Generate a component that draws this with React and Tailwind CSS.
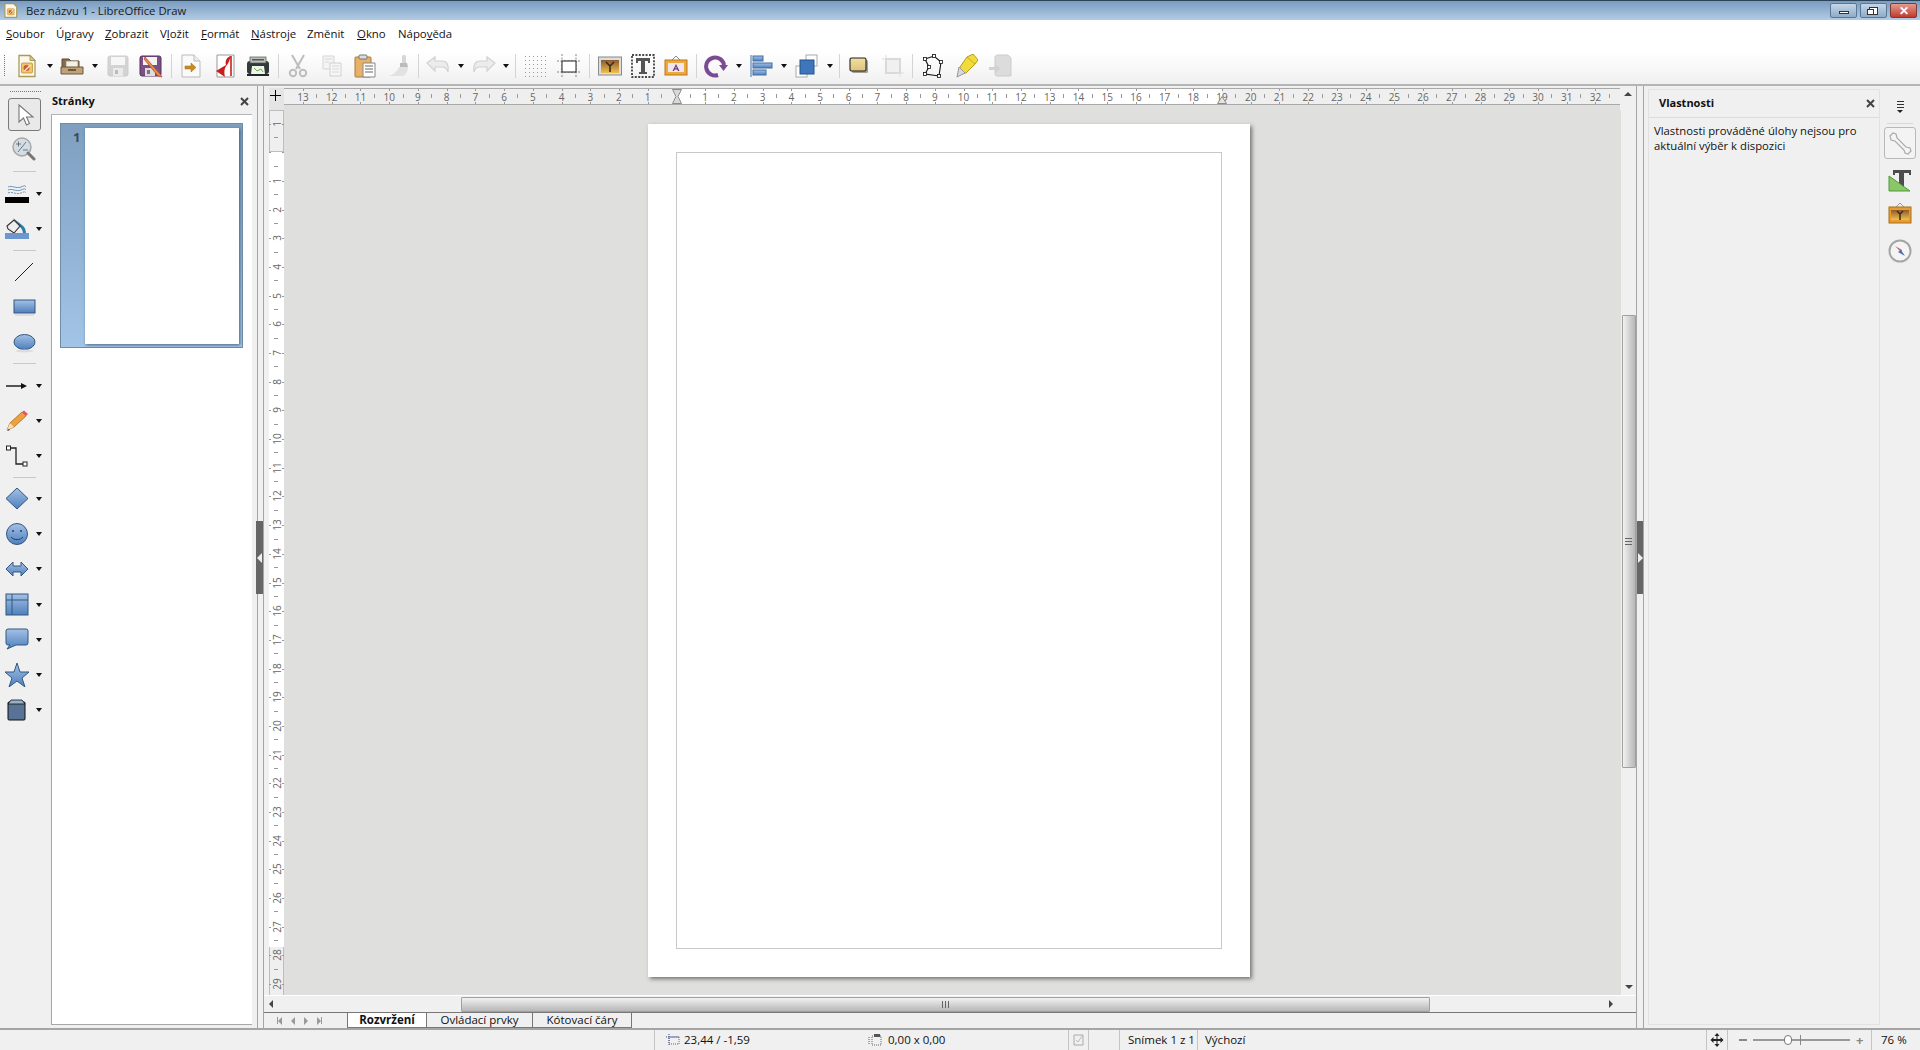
const font = { fontFamily: '"Open Sans", "Noto Sans", sans-serif' };
const MENU = [
  ["", "S", "oubor", "w-[50px]"],
  ["Ú", "p", "ravy", "w-[49px]"],
  ["", "Z", "obrazit", "w-[55px]"],
  ["V", "l", "ožit", "w-[41px]"],
  ["", "F", "ormát", "w-[50px]"],
  ["", "N", "ástroje", "w-[56px]"],
  ["Změnit", "", "", "w-[50px]"],
  ["", "O", "kno", "w-[41px]"],
  ["Nápo", "v", "ěda", "w-[60px]"],
];

/* ============ SMALL PARTS ============ */
function Arrow() {
  return (
    <div className="flex w-[12px] justify-center">
      <div className="h-0 w-0 border-x-[3.5px] border-t-[4px] border-x-transparent border-t-[#111]" />
    </div>
  );
}

function Sep() {
  return (
    <div className="flex h-[24px] w-[7px] justify-center">
      <div className="h-full w-px bg-[#d4d4d4]" />
    </div>
  );
}

function Slot({ children }) {
  return <div className="flex h-[28px] w-[33.3px] items-center justify-center">{children}</div>;
}

function Ico({ s = 24, children }) {
  return (
    <svg width={s} height={s} viewBox="0 0 24 24" fill="none">
      {children}
    </svg>
  );
}

/* ============ ICONS ============ */
const grad = (
  <defs>
    <linearGradient id="blue" x1="0" y1="0" x2="0" y2="1">
      <stop offset="0" stopColor="#a3c1e6" />
      <stop offset="1" stopColor="#4f7fbd" />
    </linearGradient>
    <linearGradient id="sand" x1="0" y1="0" x2="0" y2="1">
      <stop offset="0" stopColor="#f2dfa0" />
      <stop offset="1" stopColor="#dfc27c" />
    </linearGradient>
    <linearGradient id="sunset" x1="0" y1="0" x2="0" y2="1">
      <stop offset="0" stopColor="#8a5a30" />
      <stop offset="1" stopColor="#f2c04a" />
    </linearGradient>
  </defs>
);

const DrawBadge = ({ x = 6, y = 8 }) => (
  <g transform={`translate(${x} ${y})`}>
    <rect width="11" height="10" rx="1" fill="#f1c565" stroke="#b8862e" strokeWidth=".7" />
    <circle cx="5" cy="5" r="3" fill="#c65a3a" />
    <path d="M3 8 9 2" stroke="#f7efe0" strokeWidth="1.2" />
  </g>
);

const Icons = {
  New: () => (
    <Ico>
      <path d="M4 1.500h11l5 5v16H4z" fill="#fdf8ec" stroke="#a99a5a" strokeWidth="1.3" />
      <path d="M15 1.500v5h5z" fill="#f1c565" stroke="#a99a5a" />
      <DrawBadge x="6.5" y="9" />
    </Ico>
  ),
  Open: () => (
    <Ico>
      <path d="M2 5h7l2 2h8v11H2z" fill="#8a6c46" stroke="#5f4a2e" />
      <rect x="6" y="7" width="12" height="7" fill="#f3f0e6" stroke="#888" strokeWidth=".7" />
      <path d="M1 13h22v7H1z" fill="#bda27c" stroke="#6e5636" />
      <path d="M8 15h8v2H8z" fill="#6e5636" />
    </Ico>
  ),
  Save: () => (
    <Ico>
      <g opacity=".45">
        <rect x="2" y="2" width="20" height="20" rx="2" fill="#a8a8a8" stroke="#999" />
        <rect x="5" y="3" width="14" height="8" fill="#f3f3f3" />
        <rect x="7" y="14" width="10" height="8" fill="#ddd" />
        <rect x="9" y="16" width="3" height="4" fill="#777" />
      </g>
    </Ico>
  ),
  SaveAs: () => (
    <Ico>
      <rect x="1" y="2" width="21" height="20" rx="2" fill="#7c4f86" stroke="#55305e" />
      <rect x="4" y="3" width="14" height="8" fill="#f3f3f3" />
      <rect x="6" y="14" width="10" height="8" fill="#ddd" />
      <rect x="8" y="16" width="3" height="4" fill="#777" />
      <path d="M6 3 21 20l2 3-4-1L5 5z" fill="#e8913a" stroke="#b0483a" strokeWidth=".8" />
    </Ico>
  ),
  Export: () => (
    <Ico>
      <path d="M3 1h12l6 6v16H3z" fill="#fafafa" stroke="#bbb" />
      <path d="M15 1v6h6" stroke="#bbb" fill="#eee" />
      <path d="M6 12h6V9l5 4.500-5 4.500v-3H6z" fill="#c98a1e" stroke="#a36c10" strokeWidth=".5" />
    </Ico>
  ),
  Pdf: () => (
    <Ico>
      <path d="M4 1h17v22H4z" fill="#fff" stroke="#999" />
      <path d="M18 2C13 3 12 8 13 11L3 17l9 6c-1-4-1-9 2-12 2-2 3-7 4-9z" fill="#c81e1e" />
      <path d="M18 2v20" stroke="#c81e1e" strokeWidth="1.6" />
    </Ico>
  ),
  Print: () => (
    <Ico>
      <rect x="1" y="7" width="22" height="13" rx="3" fill="#33383a" />
      <rect x="4" y="3" width="16" height="6" fill="#b9c1b9" stroke="#555" strokeWidth=".7" />
      <rect x="6" y="5" width="12" height="1.5" fill="#555" />
      <path d="M6 12h12l1 8H5z" fill="#eef5ea" />
      <path d="M8 14l3 3 4-2 2 3" stroke="#6aa84f" />
      <path d="M1 20h22v2H1z" fill="#22262a" />
    </Ico>
  ),
  Cut: () => (
    <Ico>
      <g stroke="#b8b8b8" strokeWidth="2" opacity=".9">
        <path d="M6 1 14 15M18 1 10 15" />
        <circle cx="7" cy="19" r="3.2" />
        <circle cx="17" cy="19" r="3.2" />
      </g>
    </Ico>
  ),
  Copy: () => (
    <Ico>
      <path d="M3 2h11v13H3z" fill="#f4f4f4" stroke="#d5d5d5" />
      <path d="M10 9h11v13H10z" fill="#f6f6f6" stroke="#d0d0d0" />
      <path d="M5 5h7M5 8h4M12 12h7M12 15h7M12 18h7" stroke="#d8d8d8" />
    </Ico>
  ),
  Paste: () => (
    <Ico>
      <rect x="2" y="3" width="16" height="20" rx="1" fill="#e7b168" stroke="#a67a3a" />
      <rect x="6" y="1" width="8" height="4" rx="1" fill="#ddd" stroke="#777" />
      <path d="M10 9h12v14H10z" fill="#fff" stroke="#888" />
      <path d="M12 12h8M12 15h8M12 18h8" stroke="#666" />
    </Ico>
  ),
  Brush: () => (
    <Ico>
      <rect x="16" y="1" width="4" height="9" rx="1.5" fill="#d6d6d6" />
      <path d="M14 9h7l1 4h-8z" fill="#bbb" />
      <path d="M13 13h9c0 5-3 9-6 9H2c5-1 9-4 11-9z" fill="#e2e2e2" />
    </Ico>
  ),
  Undo: () => (
    <Ico>
      <path d="M1 9 9 3v4h7c5 0 7 4 6 11-1-4-3-5-6-5H9v4z" fill="#ececec" stroke="#d2d2d2" strokeWidth="1.2" />
    </Ico>
  ),
  Redo: () => (
    <Ico>
      <path d="M23 9 15 3v4H8c-5 0-7 4-6 11 1-4 3-5 6-5h7v4z" fill="#ececec" stroke="#d2d2d2" strokeWidth="1.2" />
    </Ico>
  ),
  Grid: () => (
    <Ico>
      <g fill="#9a9a9a">
        {[1, 5, 9, 13, 17, 21].map((x) =>
          [2, 6, 10, 14, 18, 22].map((y) => <rect key={`${x}-${y}`} x={x} y={y} width="1" height="1" />)
        )}
      </g>
    </Ico>
  ),
  Help: () => (
    <Ico>
      <path d="M0 7h24M0 18h24M5 0v24M19 0v24" stroke="#7d8a8f" strokeDasharray="2 1.5" />
      <rect x="5" y="7" width="14" height="11" fill="#fff" stroke="#222" strokeWidth="1" />
    </Ico>
  ),
  Picture: () => (
    <Ico>
      {grad}
      <rect x="0.5" y="3" width="23" height="18" fill="#ddd" stroke="#8a8a8a" />
      <rect x="3" y="6" width="18" height="13" fill="url(#sunset)" />
      <path d="M12 18v-6M12 12l-4-4M12 12l4-4" stroke="#3c2a18" strokeWidth="1.6" />
    </Ico>
  ),
  Text: () => (
    <Ico>
      <rect x="1" y="1" width="22" height="22" stroke="#111" strokeWidth="1.4" strokeDasharray="2 1.4" />
      <path d="M5 4h14v5h-2V7h-3v11h2v2H8v-2h2V7H7v2H5z" fill="#555" />
    </Ico>
  ),
  Frame: () => (
    <Ico>
      <path d="M8 6l4-4 4 4" stroke="#888" />
      <rect x="1" y="6" width="22" height="15" fill="#f0a83e" stroke="#b57a1c" />
      <rect x="4" y="9" width="16" height="9" fill="#efe7ee" />
      <path d="M12 10l3.500 7h-1.600l-.7-1.600h-2.400L9.900 17H8.500zM12 12.500l-.8 1.800h1.600z" fill="#6b3a7a" />
    </Ico>
  ),
  Rotate: () => (
    <Ico>
      <path d="M14 21A9 9 0 1 1 20 11" stroke="#7a4a92" strokeWidth="4" fill="none" />
      <path d="M15 11h9l-4.500 6z" fill="#7a4a92" />
    </Ico>
  ),
  Align: () => (
    <Ico>
      <path d="M1 1v22" stroke="#3f6ea5" />
      <rect x="3" y="2" width="10" height="5" fill="url(#blue)" stroke="#3f6ea5" />
      <rect x="3" y="9" width="19" height="5" fill="url(#blue)" stroke="#3f6ea5" />
      <rect x="3" y="16" width="13" height="5" fill="url(#blue)" stroke="#3f6ea5" />
    </Ico>
  ),
  Arrange: () => (
    <Ico>
      <rect x="11" y="1" width="11" height="11" fill="#fff" stroke="#aaa" />
      <rect x="1" y="12" width="11" height="11" fill="#fff" stroke="#aaa" />
      <rect x="5" y="6" width="14" height="14" fill="#3f76bb" stroke="#24528e" />
    </Ico>
  ),
  Shadow: () => (
    <Ico>
      <rect x="5" y="6" width="16" height="13" rx="1.5" fill="#666" opacity=".6" />
      <rect x="3" y="4" width="16" height="13" rx="1.5" fill="url(#sand)" stroke="#222" strokeWidth="1.1" />
    </Ico>
  ),
  Crop: () => (
    <Ico>
      <rect x="5" y="5" width="14" height="14" fill="#f0f0f0" stroke="#d9d9d9" strokeWidth="2" />
      <path d="M5 1v4M1 5h4M19 19v4M19 19h4" stroke="#ddd" />
    </Ico>
  ),
  Points: () => (
    <Ico>
      <path d="M4 5 13 2l7 6-2 14-14-2 4-7z" stroke="#111" strokeWidth="1.1" />
      {[[4, 5], [13, 2], [20, 8], [18, 22], [4, 20], [8, 13]].map(([x, y]) => (
        <rect key={`${x}${y}`} x={x - 1.5} y={y - 1.5} width="3" height="3" fill="#fff" stroke="#111" strokeWidth=".8" />
      ))}
    </Ico>
  ),
  Glue: () => (
    <Ico>
      <path d="M13 3 19 0l5 6-3 4-9 9-7 1 1-7z" fill="#f1dc3c" stroke="#b89a1a" />
      <path d="M13 3l8 7" stroke="#c7a820" />
      <path d="M5 13l6 6-8 4z" fill="#d9d9d9" stroke="#999" />
    </Ico>
  ),
  Solid3d: () => (
    <Ico>
      <path d="M7 3c0-1 1-2 3-2h10l3 3v17c0 1 0 1-2 1H9c-1 0-2-1-2-2z" fill="#dcdcdc" stroke="#ccc" />
      <path d="M1 13h6v-3l6 4.500-6 4.500v-3H1z" fill="#d2d2d2" />
    </Ico>
  ),
};

const Side = {
  Pointer: () => (
    <Ico>
      <path d="M6 2v17l4.500-4 3 7 3-1.500-3-6.500H20z" fill="#fff" stroke="#777" strokeWidth="1.1" />
    </Ico>
  ),
  Zoom: () => (
    <Ico>
      <circle cx="10" cy="10" r="9" fill="#d4dde4" stroke="#a5a5a5" strokeWidth="1.4" />
      <path d="M6 15 14 5M4 7h5M6.500 4.500v5M11 13h5" stroke="#5f6b75" strokeWidth=".9" />
      <path d="M16 16l6 6" stroke="#777" strokeWidth="3" strokeLinecap="round" />
    </Ico>
  ),
  LineStyle: () => (
    <Ico>
      <path d="M3 5c4-2 8 2 13 0s3-1 5-.5M3 8c4-2 8 2 13 0s3-1 5-.5" stroke="#6d93c2" strokeWidth="1" />
      <path d="M3 11c4-2 8 2 13 0s3-1 5-.5" stroke="#6d93c2" strokeDasharray="2 1" />
      <rect x="0" y="15" width="24" height="6" fill="#000" />
    </Ico>
  ),
  Fill: () => (
    <Ico>
      <path d="M8 1 17 8c3 2 4 5 4 9h-3c0-3-1-5-3-7z" fill="#2c7fa8" />
      <path d="M2 9 9 3l6 6-6 7-6-4z" fill="#eee" stroke="#333" strokeWidth="1.1" />
      <rect x="0" y="16" width="26" height="6" fill="#6d97cd" />
    </Ico>
  ),
  Line: () => (
    <Ico>
      <path d="M3 21 21 3" stroke="#222" strokeWidth="1" />
    </Ico>
  ),
  Rect: () => (
    <Ico>
      {grad}
      <rect x="2" y="5" width="21" height="13" fill="url(#blue)" stroke="#33587f" />
      <rect x="3" y="19" width="19" height="2" fill="#ddd" />
    </Ico>
  ),
  Ellipse: () => (
    <Ico>
      <ellipse cx="12.5" cy="12" rx="10.5" ry="7.5" fill="url(#blue)" stroke="#33587f" />
      <ellipse cx="12.5" cy="21" rx="9" ry="1.5" fill="#ddd" />
    </Ico>
  ),
  Arrowline: () => (
    <Ico>
      <path d="M1 12h16" stroke="#111" strokeWidth="1.4" />
      <path d="M16 9l6 3-6 3z" fill="#111" />
    </Ico>
  ),
  Pencil: () => (
    <Ico>
      <path d="M2 21 5 14 17 3l4 4L9 18z" fill="#eea13c" stroke="#a96a18" strokeWidth=".8" />
      <path d="M17 3l2-1.500 4 3.500-2 2z" fill="#e8566a" />
      <path d="M2 21l3-7 4 4z" fill="#f7dfb4" />
      <path d="M2 22l2-2 1 1z" fill="#222" />
    </Ico>
  ),
  Connector: () => (
    <Ico>
      <path d="M5 4h6v16h7" stroke="#222" strokeWidth="1.3" />
      <rect x="1.5" y="2" width="4" height="4" fill="#fff" stroke="#222" />
      <rect x="18" y="18" width="4" height="4" fill="#fff" stroke="#222" />
    </Ico>
  ),
  Diamond: () => (
    <Ico>
      <path d="M12 1 23 11.500 12 22 1 11.500z" fill="url(#blue)" stroke="#33587f" />
    </Ico>
  ),
  Smile: () => (
    <Ico>
      <circle cx="12" cy="12" r="10.5" fill="url(#blue)" stroke="#33587f" />
      <circle cx="8" cy="9" r="1" fill="#24405f" />
      <circle cx="16" cy="9" r="1" fill="#24405f" />
      <path d="M6 15c3 3.500 9 3.500 12 0" stroke="#24405f" />
    </Ico>
  ),
  Double: () => (
    <Ico>
      <path d="M1 12 8 5v4h8V5l7 7-7 7v-4H8v4z" fill="url(#blue)" stroke="#33587f" />
    </Ico>
  ),
  Flow: () => (
    <Ico>
      <rect x="1" y="1" width="22" height="21" fill="url(#blue)" stroke="#33587f" />
      <path d="M1 7h22M7 1v21" stroke="#33587f" />
    </Ico>
  ),
  Callout: () => (
    <Ico>
      <path d="M3 1h18a2 2 0 0 1 2 2v12a2 2 0 0 1-2 2H11l-9 4 3-4H3a2 2 0 0 1-2-2V3a2 2 0 0 1 2-2z" fill="url(#blue)" stroke="#33587f" />
    </Ico>
  ),
  Star: () => (
    <Ico>
      <path d="M12 0 15 9h9l-7 6 3 9-8-6-8 6 3-9-7-6h9z" fill="url(#blue)" stroke="#33587f" />
    </Ico>
  ),
  Cube: () => (
    <Ico>
      <rect x="3" y="4" width="17" height="18" rx="1" fill="#587394" stroke="#111" />
      <path d="M3 6l3-4h11l3 4z" fill="#9ab0c7" stroke="#111" strokeWidth=".8" />
    </Ico>
  ),
};

const LEFT_TOOLS = [
  ["LineStyle", true],
  ["Fill", true],
  null,
  ["Line"],
  ["Rect"],
  ["Ellipse"],
  null,
  ["Arrowline", true],
  ["Pencil", true],
  ["Connector", true],
  null,
  ["Diamond", true],
  ["Smile", true],
  ["Double", true],
  ["Flow", true],
  ["Callout", true],
  ["Star", true],
  ["Cube", true],
];

/* ============ RULERS ============ */
const CMS = Array.from({ length: 46 }, (_, i) => 13 - i);
const VCMS = Array.from({ length: 31 }, (_, i) => i - 1);

function HRuler() {
  return (
    <div className="relative flex h-[17px] w-[1336px] shrink-0 overflow-hidden border-y border-[#a9a9a9] bg-[#efefef]">
      {/* white part between the margins */}
      <div className="absolute left-[393px] top-0 h-full w-[545px] bg-white" />
      <div className="relative ml-[4.7px] flex">
        {CMS.map((n) => (
          <div key={n} className="relative flex h-full w-[28.73px] shrink-0 items-center justify-center text-[10px] text-[#666]">
            <div className="absolute left-1/2 top-0 h-[2px] w-px bg-[#999]" />
            <div className="absolute bottom-0 left-1/2 h-[2px] w-px bg-[#999]" />
            <div className="absolute right-0 top-[5px] h-[4px] w-px bg-[#999]" />
            {n !== 0 && <span className="leading-none">{Math.abs(n)}</span>}
          </div>
        ))}
      </div>
      {/* margin markers */}
      <svg className="absolute left-[388px] top-0" width="10" height="15" viewBox="0 0 10 15">
        <path d="M.5.500h9L6 7.500l3.500 7H.5L4 7.500z" fill="#d8d8d8" stroke="#8c8c8c" />
      </svg>
      <svg className="absolute left-[933px] top-0" width="10" height="15" viewBox="0 0 10 15">
        <path d="M5 7.500l4.500 7H.5z" fill="#e4e4e4" stroke="#8c8c8c" />
      </svg>
    </div>
  );
}

function VRuler() {
  return (
    <div className="relative flex h-full w-[15px] shrink-0 flex-col overflow-hidden bg-white">
      <div className="absolute left-0 right-0 top-0 h-[42px] border border-[#bdbdbd] bg-[#efefef]" />
      <div className="absolute bottom-0 left-0 right-0 h-[48px] border-x border-[#bdbdbd] bg-[#efefef]" />
      <div className="relative mt-[-0.8px] flex flex-col">
        {VCMS.map((n) => (
          <div key={n} className="relative flex h-[28.7px] w-full shrink-0 items-center justify-center text-[10px] text-[#666]">
            <div className="absolute left-0 top-1/2 h-px w-[2px] bg-[#999]" />
            <div className="absolute right-0 top-1/2 h-px w-[2px] bg-[#999]" />
            <div className="absolute bottom-0 left-[5px] h-px w-[4px] bg-[#999]" />
            {n !== 0 && <span className="-rotate-90 leading-none">{Math.abs(n)}</span>}
          </div>
        ))}
      </div>
    </div>
  );
}

function SmallArrow({ dir }) {
  const cls = {
    up: "border-x-[4px] border-b-[4px] border-x-transparent border-b-[#444]",
    down: "border-x-[4px] border-t-[4px] border-x-transparent border-t-[#444]",
    left: "border-y-[4px] border-r-[4px] border-y-transparent border-r-[#444]",
    right: "border-y-[4px] border-l-[4px] border-y-transparent border-l-[#444]",
  }[dir];
  return <div className={`h-0 w-0 ${cls}`} />;
}

function Grip({ vertical }) {
  const bar = vertical ? "h-[7px] w-px bg-[#666]" : "h-px w-[7px] bg-[#666]";
  return (
    <div className={`flex gap-[2px] ${vertical ? "" : "flex-col"}`}>
      <div className={bar} />
      <div className={bar} />
      <div className={bar} />
    </div>
  );
}

/* ============ APP ============ */
export default function App() {
  return (
    <div className="flex h-[1050px] w-[1920px] flex-col overflow-hidden bg-[#f0f0f0] text-[11.5px] text-[#111]" style={font}>
      {/* title bar */}
      <div className="flex h-[20px] shrink-0 items-center border-t border-[#2c4257] bg-gradient-to-b from-[#7a9cc0] to-[#b2cbe4]">
        <div className="ml-[3px] flex w-[23px]">
          <svg width="15" height="15" viewBox="0 0 24 24" fill="none">
            <path d="M3 1h14l5 5v17H3z" fill="#fdf8ec" stroke="#a99a5a" strokeWidth="2" />
            <DrawBadge x="7" y="9" />
          </svg>
        </div>
        <span className="text-[11.3px] leading-none text-[#1a1a1a]">Bez názvu 1 - LibreOffice Draw</span>
        <div className="ml-auto mr-[3px] flex items-start gap-[3px]">
          <div className="flex h-[15px] w-[27px] items-center justify-center rounded-[2px] border border-[#5a7896] bg-gradient-to-b from-[#c5d7e9] to-[#8fabc7]">
            <div className="mt-[3px] h-[3px] w-[10px] border border-[#333] bg-white" />
          </div>
          <div className="flex h-[15px] w-[27px] items-center justify-center rounded-[2px] border border-[#5a7896] bg-gradient-to-b from-[#c5d7e9] to-[#8fabc7]">
            <div className="relative h-[8px] w-[9px] border border-[#333] bg-white">
              <div className="absolute bottom-[-1px] left-[-3px] h-[6px] w-[7px] border border-[#333] bg-white" />
            </div>
          </div>
          <div className="flex h-[15px] w-[27px] items-center justify-center rounded-[2px] border border-[#7d3a36] bg-gradient-to-b from-[#e39a8c] to-[#c0392b] text-[12px] font-bold leading-none text-white">
            ✕
          </div>
        </div>
      </div>

      {/* menu */}
      <div className="flex h-[32px] shrink-0 items-center bg-white pb-[4px] pl-[6px] text-[11.4px]">
        {MENU.map(([a, u, b, w]) => (
          <div key={w + a + u} className={w}>
            {a}
            {u && <span className="underline">{u}</span>}
            {b}
          </div>
        ))}
      </div>

      {/* main toolbar */}
      <div className="flex h-[34px] shrink-0 items-start border-b-2 border-[#b5b5b5] bg-gradient-to-b from-white to-[#f0f0f0]">
        <div className="ml-[4px] mt-[3px] h-[21px] w-[6.5px] border-l border-dotted border-[#777]" />
        <div className="flex items-center">
          <Slot><Icons.New /></Slot>
          <Arrow />
          <Slot><Icons.Open /></Slot>
          <Arrow />
          <Slot><Icons.Save /></Slot>
          <Slot><Icons.SaveAs /></Slot>
          <Sep />
          <Slot><Icons.Export /></Slot>
          <Slot><Icons.Pdf /></Slot>
          <Slot><Icons.Print /></Slot>
          <Sep />
          <Slot><Icons.Cut /></Slot>
          <Slot><Icons.Copy /></Slot>
          <Slot><Icons.Paste /></Slot>
          <Slot><Icons.Brush /></Slot>
          <Sep />
          <Slot><Icons.Undo /></Slot>
          <Arrow />
          <Slot><Icons.Redo /></Slot>
          <Arrow />
          <Sep />
          <Slot><Icons.Grid /></Slot>
          <Slot><Icons.Help /></Slot>
          <Sep />
          <Slot><Icons.Picture /></Slot>
          <Slot><Icons.Text /></Slot>
          <Slot><Icons.Frame /></Slot>
          <Sep />
          <Slot><Icons.Rotate /></Slot>
          <Arrow />
          <Slot><Icons.Align /></Slot>
          <Arrow />
          <Slot><Icons.Arrange /></Slot>
          <Arrow />
          <Sep />
          <Slot><Icons.Shadow /></Slot>
          <Slot><Icons.Crop /></Slot>
          <Sep />
          <Slot><Icons.Points /></Slot>
          <Slot><Icons.Glue /></Slot>
          <Slot><Icons.Solid3d /></Slot>
        </div>
      </div>

      {/* work area */}
      <div className="flex min-h-0 flex-1 border-b-2 border-[#a5a5a5]">
        {/* left drawing toolbar */}
        <div className="flex w-[51px] shrink-0 flex-col bg-[#f0f0f0]">
          <div className="mx-[10px] mt-[5px] h-[2px] border-t border-dotted border-[#777]" />
          <div className="ml-[8px] mt-[5px] flex h-[33px] w-[33px] items-center justify-center rounded-[3px] border border-[#7a7a7a] bg-[#e9e9e9]">
            <Side.Pointer />
          </div>
          <div className="flex h-[35px] items-center pl-[12px]"><Side.Zoom /></div>
          <div className="flex h-[10px] items-center pl-[13px]">
            <div className="h-px w-[23px] bg-[#c8c8c8]" />
          </div>
          {LEFT_TOOLS.map((t, i) => {
            if (!t) {
              return (
                <div key={i} className="flex h-[8px] items-center pl-[13px]">
                  <div className="h-px w-[23px] bg-[#c8c8c8]" />
                </div>
              );
            }
            const Cmp = Side[t[0]];
            return (
              <div key={t[0]} className={`flex h-[35.2px] items-center ${t[1] ? "pl-[5px]" : "pl-[12px]"}`}>
                <Cmp />
                {t[1] && <div className="ml-[4px]"><Arrow /></div>}
              </div>
            );
          })}
        </div>

        {/* pages panel */}
        <div className="flex w-[206px] shrink-0 flex-col">
          <div className="mr-[5px] flex h-[29px] shrink-0 items-center justify-between border-b border-[#b5b5b5] pl-[1px] pr-[3px] pt-[3px]">
            <span className="text-[11px] font-bold">Stránky</span>
            <svg width="9" height="9" viewBox="0 0 9 9"><path d="M1 1l7 7M8 1 1 8" stroke="#444" strokeWidth="2" /></svg>
          </div>
          <div className="mb-[3px] mr-[5px] flex flex-1 flex-col border-b border-l border-[#a8a8a8] bg-white pl-[8px] pt-[8px]">
            <div className="flex h-[225px] w-[183px] border border-[#6f8caa] bg-gradient-to-b from-[#7e9fc0] to-[#a2c4e6] pb-[3px] pr-[3px] pt-[4px]">
              <div className="w-[24px] pl-[12px] text-[13px] font-bold leading-[18px] text-[#3d4c5c]">1</div>
              <div className="flex-1 bg-white shadow-[1px_1px_3px_rgba(40,60,80,0.7)]" />
            </div>
          </div>
        </div>

        {/* left splitter */}
        <div className="relative w-[7px] shrink-0 border-x border-[#a5a5a5]">
          <div className="absolute left-[-2px] top-[435px] flex h-[73px] w-[7px] items-center justify-center bg-[#666]">
            <div className="h-0 w-0 border-y-[5px] border-r-[5px] border-y-transparent border-r-[#eee]" />
          </div>
        </div>

        {/* editor */}
        <div className="flex min-w-0 flex-1 flex-col">
          <div className="flex h-[24px] shrink-0 items-start pl-[5px]">
            <div className="relative mt-[2px] h-[22px] w-[15px] shrink-0 bg-[#e4e4e4]">
              <div className="absolute left-[1px] top-[7px] h-px w-[11px] bg-black" />
              <div className="absolute left-[6px] top-[2px] h-[11px] w-px bg-black" />
            </div>
            <div className="flex h-full flex-col bg-[#dfdfdd]">
              <div className="h-[2px] bg-[#f0f0f0]" />
              <HRuler />
            </div>
            <div className="mt-[6px] flex w-[16px] justify-center"><SmallArrow dir="up" /></div>
          </div>
          <div className="flex min-h-0 flex-1 pl-[5px]">
            <VRuler />
            <div className="min-w-0 flex-1 bg-[#dfdfdd] pl-[364px] pt-[14px]">
              <div className="h-[853px] w-[602px] bg-white p-[28px] shadow-[2px_2px_4px_rgba(70,70,70,0.7)]">
                <div className="h-full w-full border border-[#c8c8c8]" />
              </div>
            </div>
            {/* vertical scrollbar */}
            <div className="flex w-[15px] shrink-0 flex-col items-center bg-[#f0f0f0]">
              <div className="mt-[205px] flex h-[453px] w-[14px] items-center justify-center rounded-[1px] border border-[#a0a0a0] bg-gradient-to-r from-[#f2f2f2] to-[#b7b7b7]">
                <Grip />
              </div>
              <div className="mb-[6px] mt-auto"><SmallArrow dir="down" /></div>
            </div>
          </div>
          {/* horizontal scrollbar */}
          <div className="flex h-[17px] shrink-0 items-center border-t border-white bg-[#f0f0f0] pl-[5px]">
            <SmallArrow dir="left" />
            <div className="ml-[188px] flex h-[15px] w-[969px] shrink-0 items-center justify-center rounded-[1px] border border-[#a0a0a0] bg-gradient-to-b from-[#f2f2f2] to-[#b7b7b7]">
              <Grip vertical />
            </div>
            <div className="ml-[179px]"><SmallArrow dir="right" /></div>
          </div>
          {/* sheet tabs */}
          <div className="flex h-[16px] shrink-0 items-stretch border-t border-[#777]">
            <div className="flex w-[83px] items-center gap-[9px] pl-[13px] opacity-50">
              <div className="flex items-center"><div className="h-[7px] w-px bg-[#444]" /><SmallArrow dir="left" /></div>
              <SmallArrow dir="left" />
              <SmallArrow dir="right" />
              <div className="flex items-center"><SmallArrow dir="right" /><div className="h-[7px] w-px bg-[#444]" /></div>
            </div>
            <div className="flex h-full w-[80px] items-center justify-center border-x border-b border-[#777] bg-white text-[11.5px] font-bold leading-none">Rozvržení</div>
            <div className="flex h-full w-[106px] items-center justify-center border-b border-r border-[#777] text-[11.5px] leading-none">Ovládací prvky</div>
            <div className="flex h-full w-[99px] items-center justify-center border-b border-r border-[#777] text-[11.5px] leading-none">Kótovací čáry</div>
          </div>
        </div>

        {/* right splitter */}
        <div className="relative w-[8px] shrink-0 border-x border-[#a5a5a5]">
          <div className="absolute left-0 top-[435px] flex h-[73px] w-[6px] items-center justify-center bg-[#666]">
            <div className="h-0 w-0 border-y-[5px] border-l-[5px] border-y-transparent border-l-[#eee]" />
          </div>
        </div>

        {/* sidebar */}
        <div className="mb-[3px] ml-[4px] mt-[3px] flex w-[232px] shrink-0 flex-col border border-[#e2e2e2]">
          <div className="flex h-[28px] shrink-0 items-center justify-between border-b border-[#dcdcdc] pl-[10px] pr-[4px]">
            <span className="text-[11px] font-bold">Vlastnosti</span>
            <svg width="9" height="9" viewBox="0 0 9 9"><path d="M1 1l7 7M8 1 1 8" stroke="#444" strokeWidth="2" /></svg>
          </div>
          <div className="px-[5px] pt-[5px] text-[11.3px] leading-[15px]">
            Vlastnosti prováděné úlohy nejsou pro aktuální výběr k dispozici
          </div>
        </div>

        {/* sidebar tab bar */}
        <div className="flex w-[40px] shrink-0 flex-col items-center pt-[15px]">
          <div className="flex h-[14px] flex-col items-center gap-[2px]">
            <div className="h-px w-[7px] bg-[#333]" />
            <div className="h-px w-[7px] bg-[#333]" />
            <div className="h-px w-[7px] bg-[#333]" />
            <div className="h-0 w-0 border-x-[3px] border-t-[3px] border-x-transparent border-t-[#222]" />
          </div>
          <div className="mt-[8px] h-px w-[26px] bg-[#d8d8d8]" />
          <div className="mt-[3px] flex h-[32px] w-[32px] items-center justify-center rounded-[3px] border border-[#b8b8b8] bg-[#f3f3f3]">
            <svg width="24" height="24" viewBox="0 0 24 24" fill="none">
              <path d="M2 5l3-3 3 1 1 4 9 9 4 1 1 3-3 3-3-1-1-3-9-9-4-1z" fill="#f5f5f5" stroke="#aaa" strokeWidth="1.2" />
            </svg>
          </div>
          <div className="mt-[10px] h-[29px]">
            <svg width="24" height="24" viewBox="0 0 24 24">
              <path d="M5 1h18v5h-2V4h-5v15H11V4H7v2H5z" fill="#4d4d4d" />
              <path d="M1 7 22 22H1z" fill="#8cc66a" stroke="#4f9a30" />
            </svg>
          </div>
          <div className="mt-[4px] h-[29px]">
            <svg width="24" height="24" viewBox="0 0 24 24" fill="none">
              {grad}
              <path d="M8 5l4-4 4 4" stroke="#999" />
              <rect x="1" y="5" width="22" height="16" fill="#e89b2e" stroke="#a8701a" />
              <rect x="3" y="8" width="18" height="10" fill="url(#sunset)" />
              <path d="M12 18v-6M12 12l-3-3M12 12l3-3" stroke="#3c2a18" strokeWidth="1.5" />
            </svg>
          </div>
          <div className="mt-[8px] h-[29px]">
            <svg width="24" height="24" viewBox="0 0 24 24" fill="none">
              <circle cx="12" cy="12" r="10.5" fill="#f4f4f4" stroke="#a5a5a5" strokeWidth="2" />
              <path d="M7 7l7 4-1 2z" fill="#d7495b" />
              <path d="M17 17l-7-4 3-2z" fill="#4a6fb0" />
            </svg>
          </div>
        </div>
      </div>

      {/* status bar */}
      <div className="flex h-[20px] shrink-0 items-center text-[11.5px] leading-none">
        <div className="ml-[654px] flex h-full w-[208px] items-center border-l border-[#c4c4c4] pl-[11px]">
          <svg width="14" height="12" viewBox="0 0 14 12" fill="none" className="mr-[4px]">
            <path d="M0 3h14M3 0v12" stroke="#3a4a8a" strokeDasharray="1 1" />
            <rect x="3" y="3" width="10" height="7" stroke="#666" strokeDasharray="1 1" />
          </svg>
          23,44 / -1,59
        </div>
        <div className="flex h-full w-[206px] items-center pl-[6px]">
          <svg width="14" height="12" viewBox="0 0 14 12" fill="none" className="mr-[6px]">
            <rect x="4" y="2" width="9" height="9" stroke="#666" strokeDasharray="1 1" />
            <rect x="6" y="0" width="6" height="3" fill="#555" />
            <path d="M1 3v8" stroke="#555" strokeDasharray="1 1" />
          </svg>
          0,00 x 0,00
        </div>
        <div className="flex h-full w-[21px] items-center justify-center border-x border-[#c4c4c4]">
          <svg width="11" height="12" viewBox="0 0 11 12" fill="none">
            <path d="M1 1h9v10H1z" stroke="#aaa" />
            <path d="M3 6l2 2 4-6" stroke="#bbb" />
          </svg>
        </div>
        <div className="ml-[30px] flex h-full w-[78px] items-center border-l border-[#c4c4c4] pl-[8px]">Snímek 1 z 1</div>
        <div className="flex h-full w-[509px] items-center border-l border-[#c4c4c4] pl-[7px]">Výchozí</div>
        <div className="flex h-full w-[22px] items-center justify-center border-x border-[#c4c4c4]">
          <svg width="14" height="14" viewBox="0 0 14 14"><path d="M7 0l2.500 3h-2v3h3V4l3 3-3 3V8h-3v3h2L7 14l-2.500-3h2V8h-3v2l-3-3 3-3v2h3V3h-2z" fill="#222" /></svg>
        </div>
        <div className="flex h-full w-[143px] items-center">
          <div className="ml-[11px] h-[2px] w-[8px] bg-[#888]" />
          <div className="relative ml-[6px] h-[2px] w-[97px] bg-[#999]">
            <div className="absolute left-[31px] top-[-4px] h-[10px] w-[8px] rounded-full border border-[#777] bg-white" />
            <div className="absolute left-[47px] top-[-4px] h-[10px] w-px bg-[#888]" />
          </div>
          <div className="ml-[6px] text-[13px] font-bold leading-none text-[#888]">+</div>
        </div>
        <div className="flex h-full items-center border-l border-[#c4c4c4] pl-[9px]">76 %</div>
      </div>
    </div>
  );
}
